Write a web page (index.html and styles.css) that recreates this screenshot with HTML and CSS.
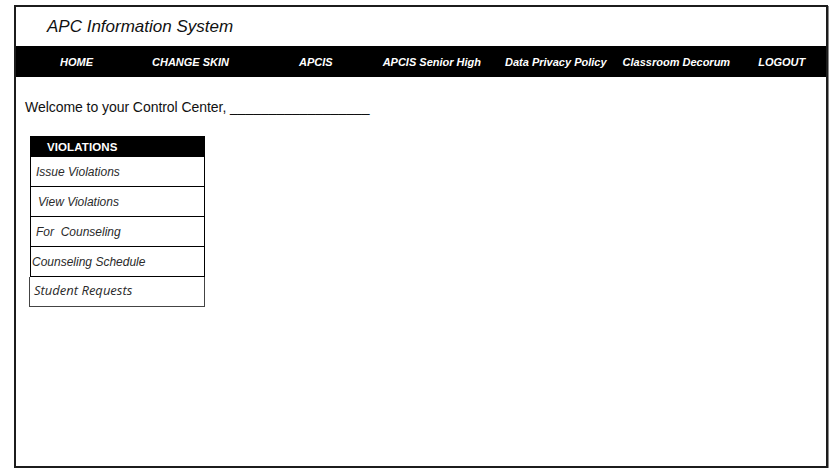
FILE: index.html
```html
<!DOCTYPE html>
<html>
<head>
<meta charset="utf-8">
<link rel="stylesheet" href="styles.css">
</head>
<body>
<div class="frame">
  <div class="header"><span class="title">APC Information System</span></div>
  <nav class="nav">
    <a class="nav-link nav-home" href="#">HOME</a>
    <a class="nav-link nav-skin" href="#">CHANGE SKIN</a>
    <a class="nav-link nav-apcis" href="#">APCIS</a>
    <a class="nav-link nav-senior" href="#">APCIS Senior High</a>
    <a class="nav-link nav-privacy" href="#">Data Privacy Policy</a>
    <a class="nav-link nav-decorum" href="#">Classroom Decorum</a>
    <a class="nav-link nav-logout" href="#">LOGOUT</a>
  </nav>
  <div class="welcome">Welcome to your Control Center, __________________</div>
  <div class="panel">
    <div class="panel-head">VIOLATIONS</div>
    <div class="panel-item pad-5">Issue Violations</div>
    <div class="panel-item pad-7">View Violations</div>
    <div class="panel-item pad-5">For&nbsp; Counseling</div>
    <div class="panel-item pad-1">Counseling Schedule</div>
    <div class="panel-item panel-item-alt">Student Requests</div>
  </div>
</div>
</body>
</html>
```
FILE: styles.css
```css
body {
  margin: 0;
  background: #fff;
  font-family: "Liberation Sans", Arial, sans-serif;
  color: #000;
}
.frame {
  margin: 5px 0 0 14px;
  width: 814px;
  height: 463px;
  box-sizing: border-box;
  border: 2px solid #1c1c1c;
  box-shadow: 1px 1px 0 #8a8a8a;
}
.header {
  height: 39px;
  display: flex;
  align-items: center;
  padding-left: 31px;
}
.title {
  font-style: italic;
  font-size: 17px;
  color: #111;
}
.nav {
  height: 31px;
  background: #000;
  display: flex;
  align-items: center;
}
.nav-link {
  color: #fff;
  font-weight: bold;
  font-style: italic;
  font-size: 11px;
  text-decoration: none;
  white-space: nowrap;
  padding-top: 1px;
}
.nav-home { margin-left: 44px; }
.nav-skin { margin-left: 59px; }
.nav-apcis { margin-left: 70px; }
.nav-senior { margin-left: 50px; }
.nav-privacy { margin-left: 24px; }
.nav-decorum { margin-left: 16px; }
.nav-logout { margin-left: 28px; }
.welcome {
  margin: 22px 0 0 9px;
  font-size: 14px;
  line-height: 16px;
  letter-spacing: -0.05px;
  color: #111;
}
.panel {
  margin: 21px 0 0 14px;
  width: 175px;
}
.panel-head {
  background: #000;
  color: #fff;
  height: 21px;
  box-sizing: border-box;
  padding: 5px 0 0 17px;
  font-weight: bold;
  font-size: 11.5px;
  letter-spacing: 0.1px;
}
.panel-item {
  height: 29px;
  border: 1px solid #000;
  border-top: none;
  display: flex;
  align-items: center;
  font-style: italic;
  font-size: 12px;
  color: #2a2a2a;
}
.pad-1 { padding-left: 1px; }
.pad-5 { padding-left: 5px; }
.pad-7 { padding-left: 7px; }
.panel-item-alt {
  border-color: #444;
  margin-left: -1px;
  padding: 0 0 3px 4px;
  box-sizing: border-box;
  height: 30px;
  font-family: "Open Sans", "Liberation Sans", sans-serif;
  font-size: 13px;
  color: #2a2a2a;
}
```
